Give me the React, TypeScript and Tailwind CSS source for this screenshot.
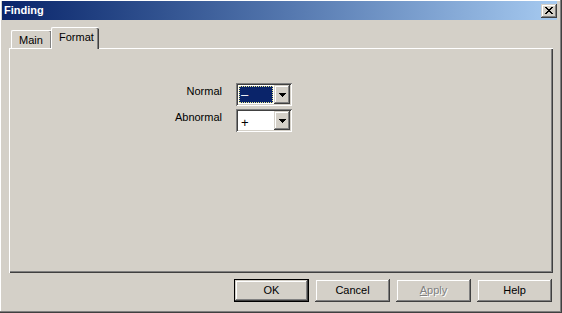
import React from "react";

// Classic Win2000-style property dialog: "Finding" with Main/Format tabs.
const raised =
  "shadow-[inset_-1px_-1px_0_#404040,inset_1px_1px_0_#d4d0c8,inset_-2px_-2px_0_#808080,inset_2px_2px_0_#ffffff]";
const sunken =
  "shadow-[inset_1px_1px_0_#808080,inset_-1px_-1px_0_#ffffff,inset_2px_2px_0_#404040,inset_-2px_-2px_0_#d4d0c8]";

function DropArrow() {
  return (
    <svg width="7" height="4" viewBox="0 0 7 4" shapeRendering="crispEdges">
      <path d="M0 0h7v1H0zM1 1h5v1H1zM2 2h3v1H2zM3 3h1v1H3z" fill="#000" />
    </svg>
  );
}

function Combo({ value, selected }: { value: string; selected?: boolean }) {
  return (
    <div className={`flex h-[23px] w-[56px] bg-white p-[2px] ${sunken}`}>
      <div className="flex-1 p-px">
        {selected ? (
          <div className="h-full border border-dotted border-[#e8e890] bg-[#0a246a] pl-[1px] text-[13px] leading-[15px] text-white">
            {value}
          </div>
        ) : (
          <div className="h-full pl-[2px] pt-[3px] text-[13px] leading-[15px] text-black">{value}</div>
        )}
      </div>
      <div className={`flex w-[16px] items-center justify-center bg-[#d4d0c8] ${raised}`}>
        <DropArrow />
      </div>
    </div>
  );
}

function Btn({
  children,
  isDefault,
  disabled,
}: {
  children: React.ReactNode;
  isDefault?: boolean;
  disabled?: boolean;
}) {
  const inner = (
    <div
      className={`flex h-full w-full items-center justify-center ${raised} ${
        disabled ? "text-[#808080] [text-shadow:1px_1px_0_#fff]" : "text-black"
      }`}
    >
      {children}
    </div>
  );
  return isDefault ? (
    <div className="h-[23px] w-[75px] border border-black">{inner}</div>
  ) : (
    <div className="h-[23px] w-[75px]">{inner}</div>
  );
}

export default function App() {
  return (
    <div className="h-[313px] w-[562px] bg-[#d4d0c8] font-['Liberation_Sans',Arial,sans-serif] text-[11px] leading-[13px] text-black shadow-[inset_-1px_-1px_0_#404040,inset_-2px_-2px_0_#808080,inset_1px_1px_0_#ffffff]">
      <div className="flex h-full flex-col pb-[4px] pl-[2px] pr-[5px] pt-px">
        {/* title bar */}
        <div className="flex h-[19px] items-center justify-between bg-linear-to-r from-[#0a246a] to-[#a6caf0] pl-[2px]">
          <span className="text-[11px] font-bold text-white">Finding</span>
          <div className={`flex h-[14px] w-[16px] items-center justify-center bg-[#d4d0c8] ${raised}`}>
            <svg width="8" height="7" viewBox="0 0 8 7" shapeRendering="crispEdges">
              <path
                d="M0 0h2v1H0zM6 0h2v1H6zM1 1h2v1H1zM5 1h2v1H5zM2 2h4v1H2zM3 3h2v1H3zM2 4h4v1H2zM1 5h2v1H1zM5 5h2v1H5zM0 6h2v1H0zM6 6h2v1H6z"
                fill="#000"
              />
            </svg>
          </div>
        </div>

        <div className="flex flex-1 flex-col pl-[7px] pr-[4px]">
          {/* tabs */}
          <div className="mt-[7px] flex h-[21px] items-end pl-[2px]">
            <div className="h-[18px] w-[41px] rounded-tl-[2px] rounded-tr-[2px] border-l border-t border-white pl-[7px] pt-[3px] shadow-[inset_-1px_0_0_#404040,inset_-2px_0_0_#808080]">
              Main
            </div>
            <div className="relative z-10 -mb-px ml-[-1px] h-[22px] w-[48px] rounded-tl-[2px] rounded-tr-[2px] border-l border-t border-white bg-[#d4d0c8] pl-[7px] pt-[3px] shadow-[inset_-1px_0_0_#404040,inset_-2px_0_0_#808080]">
              Format
            </div>
          </div>

          {/* panel */}
          <div className="h-[225px] border-l border-t border-white shadow-[inset_-1px_-1px_0_#404040,inset_-2px_-2px_0_#808080]">
            <div className="flex flex-col gap-[3px] pt-[34px]">
              <div className="flex">
                <div className="w-[212px] pt-[2px] text-right">Normal</div>
                <div className="ml-[14px]">
                  <Combo value="–" selected />
                </div>
              </div>
              <div className="flex">
                <div className="w-[212px] pt-[2px] text-right">Abnormal</div>
                <div className="ml-[14px]">
                  <Combo value="+" />
                </div>
              </div>
            </div>
          </div>

          {/* buttons */}
          <div className="mt-[6px] flex justify-end gap-[6px] pr-px">
            <Btn isDefault>OK</Btn>
            <Btn>Cancel</Btn>
            <Btn disabled>
              <span>
                <span className="underline">A</span>pply
              </span>
            </Btn>
            <Btn>Help</Btn>
          </div>
        </div>
      </div>
    </div>
  );
}
